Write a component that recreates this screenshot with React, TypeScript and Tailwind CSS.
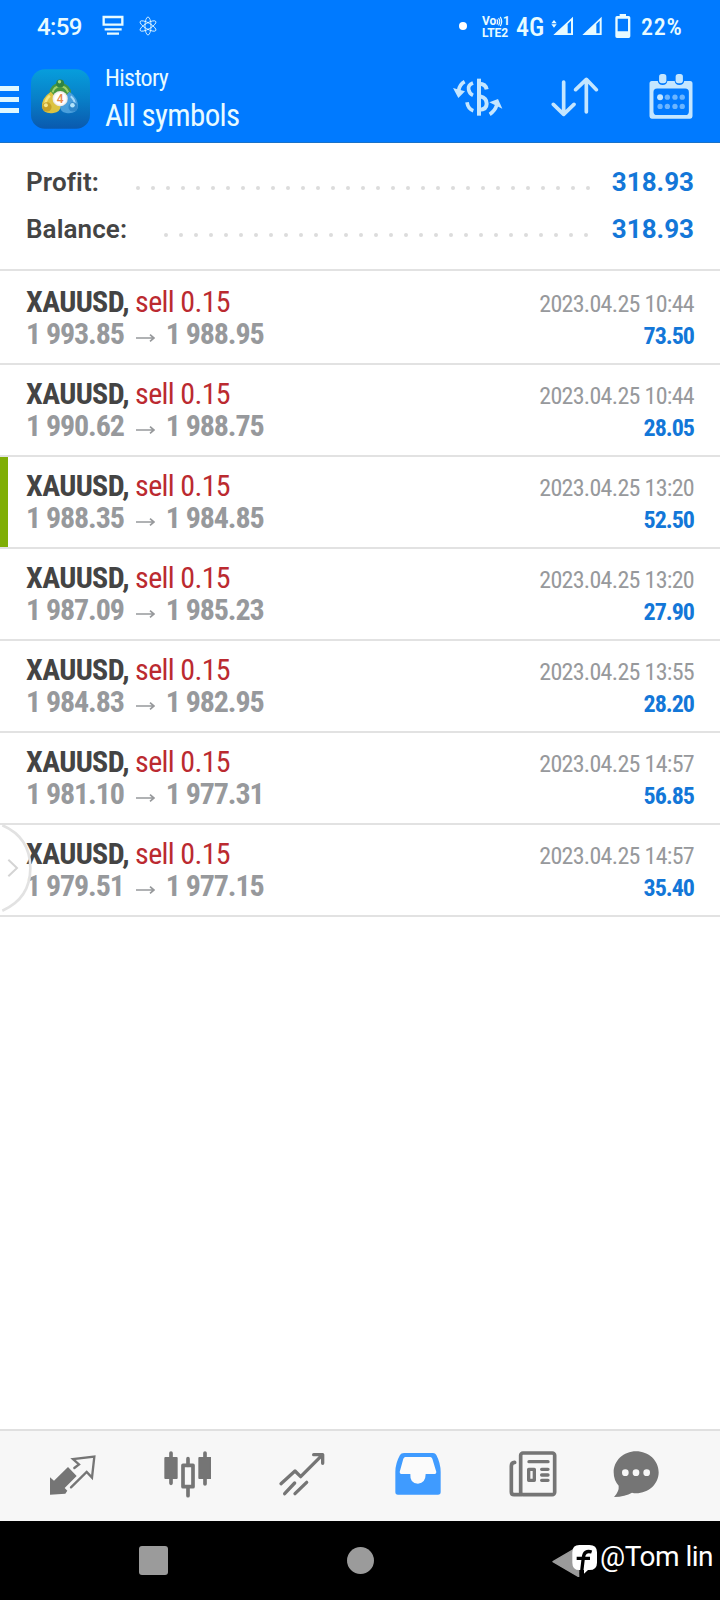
import type { ReactNode } from "react";

type Deal = {
  open: string;
  close: string;
  time: string;
  profit: string;
  marked?: boolean;
};

const deals: Deal[] = [
  { open: "1 993.85", close: "1 988.95", time: "2023.04.25 10:44", profit: "73.50" },
  { open: "1 990.62", close: "1 988.75", time: "2023.04.25 10:44", profit: "28.05" },
  { open: "1 988.35", close: "1 984.85", time: "2023.04.25 13:20", profit: "52.50", marked: true },
  { open: "1 987.09", close: "1 985.23", time: "2023.04.25 13:20", profit: "27.90" },
  { open: "1 984.83", close: "1 982.95", time: "2023.04.25 13:55", profit: "28.20" },
  { open: "1 981.10", close: "1 977.31", time: "2023.04.25 14:57", profit: "56.85" },
  { open: "1 979.51", close: "1 977.15", time: "2023.04.25 14:57", profit: "35.40" },
];

const StatusBar = () => (
  <div className="flex h-[52px] items-center pl-[37px] text-[#e8fbff]">
    <span className="w-[45px] pt-[3px] text-2xl font-medium leading-[49px] tracking-[-0.6px]">4:59</span>
    <svg className="ml-[20px] h-[22px] w-[22px]" viewBox="0 0 66 66" fill="none" stroke="currentColor">
      <path d="M5 6H61V29H5Z" strokeWidth="7" />
      <path d="M8 43H59M15 56H51" strokeWidth="7" />
    </svg>
    <svg className="ml-[15px] h-[20px] w-[18px]" viewBox="0 0 54 60" fill="none" stroke="currentColor" strokeWidth="2.5">
      <ellipse cx="27" cy="30" rx="9" ry="27" />
      <ellipse cx="27" cy="30" rx="9" ry="27" transform="rotate(60 27 30)" />
      <ellipse cx="27" cy="30" rx="9" ry="27" transform="rotate(-60 27 30)" />
    </svg>
    <span className="ml-[302px] h-2 w-2 rounded-full bg-white" />
    <span className="mt-[2px] ml-[15px] flex w-[28px] flex-col text-[12px] font-bold leading-[12px]">
      <span className="flex items-center">
        Vo
        <svg className="h-[11px] w-[7px]" viewBox="0 0 8 11" fill="none" stroke="currentColor" strokeWidth="1.4">
          <path d="M1 3Q3 6 1 9M3 1.500Q6 5.500 3 10M5 0Q8.500 5.500 5 11" />
        </svg>
        1
      </span>
      <span>LTE2</span>
    </span>
    <span className="ml-[6px] w-[28px] pt-[3px] text-[26px] font-medium leading-[49px] font-stretch-condensed">4G</span>
    <svg className="ml-[7px] h-[20px] w-[22px]" viewBox="0 0 66 60" fill="currentColor">
      <path d="M1 22L9 12L17 22ZM1 25L9 35L17 25Z" />
      <path fillRule="evenodd" d="M7 57L66 2V57ZM50 24V52H60V14Z" />
    </svg>
    <svg className="ml-[9px] h-[20px] w-[20px]" viewBox="0 0 60 60" fill="currentColor">
      <path fillRule="evenodd" d="M1 57L59 2V57ZM43 24V52H53V14Z" />
    </svg>
    <svg className="ml-[13px] h-[24px] w-[16px]" viewBox="0 0 48 72" fill="currentColor">
      <path
        fillRule="evenodd"
        d="M14 0H33V6H41Q46 6 46 11V67Q46 72 41 72H6Q1 72 1 67V11Q1 6 6 6H14ZM8 14V52H39V14Z"
      />
    </svg>
    <span className="ml-[10px] w-[44px] pt-[3px] text-2xl font-medium leading-[49px] tracking-[0.8px] font-stretch-condensed">
      22%
    </span>
  </div>
);

const AppLogo = () => (
  <svg className="mt-[3px] ml-[12px] h-[60px] w-[59px] shrink-0" viewBox="0 0 178 180">
    <defs>
      <linearGradient id="tile" x1="0" y1="0" x2="0" y2="1">
        <stop offset="0" stopColor="#079edc" />
        <stop offset="0.5" stopColor="#087fc8" />
        <stop offset="1" stopColor="#0a59ae" />
      </linearGradient>
      <radialGradient id="badge">
        <stop offset="0.7" stopColor="#fff" />
        <stop offset="1" stopColor="#e6e0dc" />
      </radialGradient>
    </defs>
    <rect width="178" height="180" rx="42" fill="url(#tile)" />
    <path d="M56 74Q54 46 88 40Q122 46 121 74L106 92H70Z" fill="#46963f" />
    <path d="M65 70Q70 53 88 51Q106 53 112 70" fill="none" stroke="#9fd06a" strokeWidth="6" />
    <path d="M60 68Q32 86 33 114Q38 136 68 132Q88 130 92 108L72 82Z" fill="#dcc342" />
    <path d="M57 80Q42 92 44 110" fill="none" stroke="#f4e482" strokeWidth="8" />
    <path d="M116 68Q142 86 142 114Q136 136 106 132Q88 130 88 110L104 82Z" fill="#4a9fdc" />
    <path d="M120 82Q134 94 132 110" fill="none" stroke="#a6dafa" strokeWidth="6" />
    <circle cx="88" cy="43" r="12" fill="#2f8443" />
    <circle cx="86" cy="38" r="5" fill="#a2d97e" />
    <circle cx="48" cy="114" r="14" fill="#c4a028" />
    <circle cx="45" cy="109" r="6" fill="#f2e68e" />
    <circle cx="127" cy="114" r="14" fill="#2f87cb" />
    <circle cx="125" cy="109" r="7" fill="#b3e4fb" />
    <circle cx="88" cy="89" r="23" fill="url(#badge)" />
    <text x="88" y="102" textAnchor="middle" fontFamily="Roboto" fontSize="36" fontWeight="500" fill="#e8884a">
      4
    </text>
  </svg>
);

const AppBar = () => (
  <div className="flex h-[90px] items-center">
    <div className="mt-[5px] flex w-[19px] shrink-0 flex-col gap-[6px]">
      <span className="h-[5px] bg-[#dff8ff]" />
      <span className="h-[5px] bg-[#dff8ff]" />
      <span className="h-[5px] bg-[#dff8ff]" />
    </div>
    <AppLogo />
    <div className="mt-[6px] ml-[15px] flex flex-col tracking-[-0.65px] text-[#e8fbff] font-stretch-condensed">
      <span className="text-2xl leading-8">History</span>
      <span className="text-[31px] leading-[44px]">All symbols</span>
    </div>
    <div className="ml-auto flex items-center pr-[27px] text-[#c4e6ff]">
      <svg className="h-[40px] w-[50px]" viewBox="0 0 150 120" fill="none" stroke="currentColor" strokeWidth="11">
        <path d="M78 5V116" strokeWidth="12" />
        <path d="M101 37Q98 20 78 20H74M74 58H82Q101 62 101 80Q101 98 78 98H74" strokeWidth="12" />
        <path d="M60 18Q44 24 47 38Q49 50 60 55M42 76Q45 96 61 101" />
        <path d="M35 14Q20 22 17 40" strokeWidth="11" />
        <path d="M0 33L36 43L16 63Z" fill="currentColor" stroke="none" />
        <path d="M110 112Q126 102 131 85" strokeWidth="11" />
        <path d="M109 76L135 66L148 95Z" fill="currentColor" stroke="none" />
      </svg>
      <svg
        className="ml-[48px] h-[40px] w-[48px]"
        viewBox="0 0 144 120"
        fill="none"
        stroke="currentColor"
        strokeWidth="11"
        strokeLinecap="round"
        strokeLinejoin="round"
      >
        <path d="M38 15V110M7 82L38 112L69 82M106 105V10M74 38L106 7L136 38" />
      </svg>
      <svg className="mb-[1px] ml-[50px] h-[45px] w-[44px]" viewBox="0 0 132 136" fill="currentColor">
        <path
          fillRule="evenodd"
          d="M8 21H26Q28 33 41 33Q53 33 55 21H77Q79 33 91 33Q104 33 106 21H124Q131 21 131 29V128Q131 135 124 135H8Q1 135 1 128V29Q1 21 8 21ZM24 44Q13 44 13 55V113Q13 124 24 124H109Q120 124 120 113V55Q120 44 109 44Z"
        />
        <rect x="30" y="0" width="22" height="28" rx="8" />
        <rect x="80" y="0" width="22" height="28" rx="8" />
        <circle cx="33" cy="70" r="9" />
        <g opacity="0.55">
          <circle cx="55" cy="70" r="8" />
          <circle cx="78" cy="70" r="8" />
          <circle cx="100" cy="70" r="8" />
          <circle cx="33" cy="98" r="8" />
          <circle cx="55" cy="98" r="8" />
          <circle cx="78" cy="98" r="8" />
          <circle cx="100" cy="98" r="8" />
        </g>
      </svg>
    </div>
  </div>
);

const SummaryRow = ({ label, value, dots, className }: { label: string; value: string; dots: number; className: string }) => (
  <div className="flex h-[47px] items-center">
    <span className="text-[26px] font-semibold tracking-[0.1px] text-[#444]">{label}</span>
    <div className={`mt-[10px] ml-auto flex justify-between ${className}`}>
      {Array.from({ length: dots }, (_, i) => (
        <span key={i} className="h-1 w-1 rounded-full bg-[#dcdcdc]" />
      ))}
    </div>
    <span className="text-[26px] font-bold text-[#1377d8]">{value}</span>
  </div>
);

const DealRow = ({ deal }: { deal: Deal }) => (
  <li
    className={`flex justify-between border-b-2 border-[#e2e2e2] py-[13px] pr-[26px] first:pt-[15px] ${
      deal.marked ? "bg-linear-to-r from-[#7fae06] from-[8px] to-white to-[8px]" : ""
    }`}
  >
    <div className="flex flex-col pl-[26px] text-[30px] leading-8 font-stretch-condensed">
      <span className="tracking-[-0.65px]">
        <b className="font-bold text-[#444]">XAUUSD,</b> <span className="text-[#bb2a30]">sell 0.15</span>
      </span>
      <span className="flex items-center font-bold tracking-[-1.1px] text-[#97999c]">
        {deal.open}
        <svg className="mr-[11px] ml-[12px] mt-[8px] h-3 w-[19px]" viewBox="0 0 57 36" fill="none" stroke="currentColor" strokeWidth="5">
          <path d="M0 18H54M42 8L54 18L42 28" />
        </svg>
        {deal.close}
      </span>
    </div>
    <div className="-mb-0.5 flex flex-col items-end pt-0.5 text-2xl leading-8 font-stretch-condensed">
      <span className="tracking-[-0.7px] text-[#97999c]">{deal.time}</span>
      <span className="font-bold tracking-[-1px] text-[#1377d8]">{deal.profit}</span>
    </div>
  </li>
);

const EdgeHandle = () => (
  <svg
    className="absolute left-0 top-[823px] h-[90px] w-[34px]"
    viewBox="0 0 102 270"
    fill="none"
    stroke="#e2e2e2"
    strokeWidth="8"
  >
    <path d="M7 7Q91 44 91 135Q91 226 7 263" />
    <path d="M25 110L51 135L25 160" stroke="#d4d4d4" strokeWidth="6" />
  </svg>
);

const NavIcon = ({ children }: { children: ReactNode }) => (
  <svg
    className="h-12 w-12"
    viewBox="0 0 144 144"
    fill="none"
    stroke="currentColor"
    strokeWidth="8"
    strokeLinecap="round"
    strokeLinejoin="round"
  >
    {children}
  </svg>
);

const BottomNav = () => (
  <nav className="flex h-[92px] items-center border-t-2 border-[#e0e0e0] bg-[#f7f7f7] pl-[14px] pb-[5px] text-[#757575]">
    <div className="flex w-[115px] justify-center">
      <NavIcon>
        <path
          d="M6 82L18 92L60 51L86 78L50 114L58 122L52 131L6 134Z"
          fill="currentColor"
          stroke="none"
        />
        <path d="M79 54L93 43L75 27L139 20L132 83L116 66L69 112" strokeWidth="7" strokeLinejoin="miter" />
      </NavIcon>
    </div>
    <div className="flex w-[115px] justify-center">
      <NavIcon>
        <path d="M24 9V100M126 9V102M75 26V46M75 112V137" strokeWidth="11" />
        <rect x="7" y="24" width="34" height="60" fill="currentColor" strokeWidth="6" />
        <rect x="109" y="24" width="34" height="60" fill="currentColor" strokeWidth="6" />
        <rect x="60" y="46" width="30" height="64" strokeWidth="11" />
      </NavIcon>
    </div>
    <div className="flex w-[116px] justify-center">
      <NavIcon>
        <path d="M9 101L51 63L68 80L134 14M107 14H134V40M20 131L50 99M51 131L86 97" strokeWidth="10" />
      </NavIcon>
    </div>
    <div className="flex w-[115px] justify-center text-[#3f9bff]">
      <NavIcon>
        <path
          d="M30 9H117Q124 9 127 15Q140 40 140 66V126Q140 134 132 134H12Q4 134 4 126V66Q4 40 18 15Q21 9 30 9Z"
          fill="currentColor"
          stroke="none"
        />
        <path
          d="M34 21Q30 21 28 26L17 66Q17 72 22 72H49Q47 101 72 101Q95 99 95 72H122Q127 72 127 66L115 26Q113 21 109 21Z"
          fill="#fbfbfb"
          stroke="none"
        />
      </NavIcon>
    </div>
    <div className="flex w-[115px] justify-center">
      <NavIcon>
        <rect x="35" y="9" width="102" height="125" rx="7" strokeWidth="11" />
        <path d="M35 134H15Q7 134 7 126V48Q7 38 17 37" strokeWidth="11" />
        <path d="M60 35H117M98 58H117M98 75H117M98 91H117" strokeWidth="10" />
        <rect x="59" y="58" width="17" height="33" strokeWidth="10" />
      </NavIcon>
    </div>
    <div className="flex w-[92px] justify-center">
      <NavIcon>
        <path
          d="M72 4C110 4 140 32 140 67C140 102 110 130 72 130Q66 130 60 128Q40 140 6 141Q22 124 20 107Q5 91 5 67C5 32 35 4 72 4Z"
          fill="currentColor"
          stroke="none"
        />
        <g fill="#f7f7f7" stroke="none">
          <circle cx="40" cy="68" r="10" />
          <circle cx="72" cy="68" r="10" />
          <circle cx="104" cy="68" r="10" />
        </g>
      </NavIcon>
    </div>
  </nav>
);

const SystemNav = () => (
  <div className="flex h-[79px] items-center bg-black">
    <span className="ml-[139px] h-[29px] w-[29px] rounded-[3px] bg-[#9b9b9b]" />
    <span className="ml-[179px] h-[27px] w-[27px] rounded-full bg-[#9b9b9b]" />
    <svg className="ml-[178px] h-[32px] w-[46px]" viewBox="0 0 138 96">
      <path d="M3 50L80 5V95Z" fill="#9b9b9b" stroke="#9b9b9b" strokeWidth="4" strokeLinejoin="round" />
      <path d="M82 0H112Q135 0 135 22V53Q135 75 112 75H108L96 86V75H82Q61 75 61 53V22Q61 0 82 0Z" fill="#fff" />
      <path d="M119 21Q97 14 94 38L88 88M74 40H114" fill="none" stroke="#000" strokeWidth="10" />
    </svg>
    <span className="mb-[7px] ml-[2px] whitespace-nowrap text-[28px] tracking-[-0.5px] text-white">@Tom lin</span>
  </div>
);

const App = () => (
  <div className="relative flex h-[1600px] w-[720px] flex-col overflow-hidden bg-white font-['Roboto',sans-serif]">
    <header className="h-[143px] shrink-0 border-b border-[#1a72c8] bg-[#007aff]">
      <StatusBar />
      <AppBar />
    </header>
    <section className="h-[128px] shrink-0 border-b-2 border-[#e2e2e2] pl-[26px] pr-[26px] pt-[16px]">
      <SummaryRow label="Profit:" value="318.93" dots={31} className="mr-[22px] w-[454px]" />
      <SummaryRow label="Balance:" value="318.93" dots={29} className="mr-[24px] w-[424px]" />
    </section>
    <ul className="flex-1">
      {deals.map((deal) => (
        <DealRow key={deal.open} deal={deal} />
      ))}
    </ul>
    <EdgeHandle />
    <BottomNav />
    <SystemNav />
  </div>
);

export default App;
